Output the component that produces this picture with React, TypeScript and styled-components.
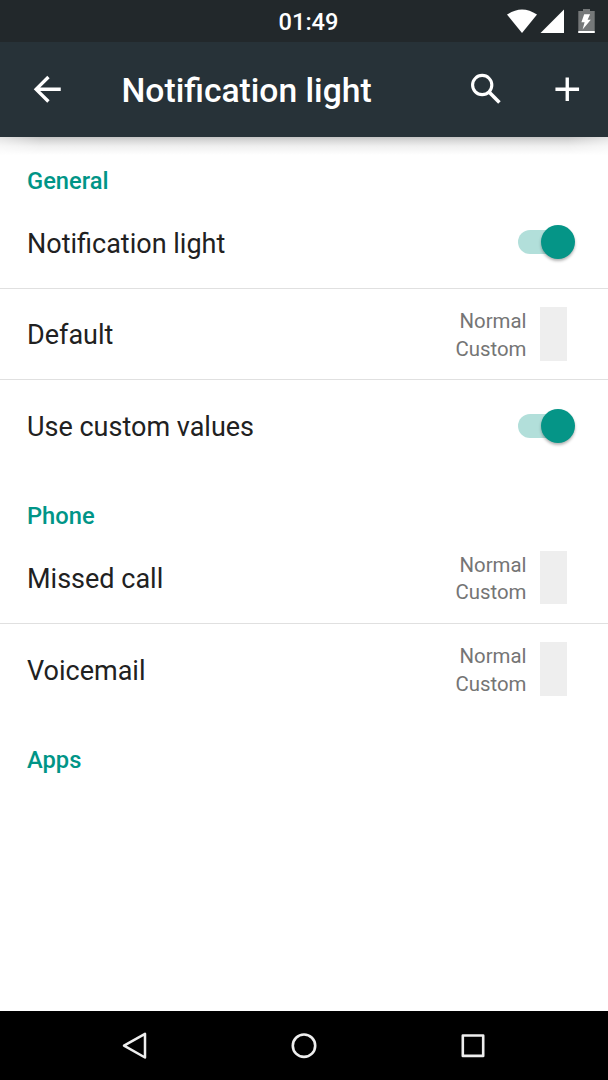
import React from 'react';
import styled, { createGlobalStyle } from 'styled-components';

const GlobalStyle = createGlobalStyle`
  * { box-sizing: border-box; }
  body { margin: 0; background: #fff; font-family: Roboto, sans-serif; }
  svg { display: block; }
`;

const Screen = styled.div`
  width: 608px;
  height: 1080px;
  display: flex;
  flex-direction: column;
  overflow: hidden;
  background: #fff;
`;

const StatusBar = styled.header`
  height: 42px;
  flex: none;
  display: grid;
  grid-template-columns: 1fr auto 1fr;
  align-items: center;
  padding: 0 13px 0 22px;
  background: #22282b;
`;

const Clock = styled.span`
  grid-column: 2;
  color: #fff;
  font-size: 23.6px;
  font-weight: 500;
  line-height: 40px;
  padding-top: 2px;
`;

const StatusIcons = styled.div`
  display: flex;
  justify-content: flex-end;
  align-items: center;
`;

const Toolbar = styled.div`
  position: relative;
  height: 94.5px;
  flex: none;
  display: flex;
  align-items: center;
  padding: 0 20.5px 0 27px;
  background: #273238;
  color: #fff;
`;

const ToolbarShadow = styled.div`
  position: absolute;
  top: 100%;
  left: 0;
  right: 0;
  height: 18px;
  background: linear-gradient(#c4c4c4, #dadada 22%, #efefef 50%, #fff);
  mask-image: linear-gradient(90deg, rgba(0, 0, 0, 0.5), #000 40px, #000 568px, rgba(0, 0, 0, 0.5));
`;

const Title = styled.h1`
  flex: 1;
  margin: 0 0 0 54px;
  padding-top: 4px;
  font-size: 33.65px;
  font-weight: 500;
  line-height: 40px;
  white-space: nowrap;
`;

const Actions = styled.div`
  display: flex;
  gap: 41px;
`;

const List = styled.main`
  flex: 1;
`;

const SectionTitle = styled.h2`
  height: 60.5px;
  margin: 0;
  padding: 30.2px 27px 0;
  color: #009587;
  font-size: 23.7px;
  font-weight: 500;
  line-height: 28px;
`;

const Row = styled.div<{ $divided?: boolean; $pad: number }>`
  height: 91.6px;
  display: flex;
  align-items: center;
  padding: 0 ${p => p.$pad}px 0 27px;
  border-bottom: 1px solid ${p => (p.$divided ? '#e0e0e0' : 'transparent')};
`;

const Label = styled.span`
  flex: 1;
  padding-top: 3.2px;
  color: #212121;
  font-size: 27px;
  line-height: 32px;
`;

const Values = styled.div`
  display: flex;
  flex-direction: column;
  align-items: flex-end;
  margin-right: 13.5px;
  padding-top: 3.6px;
  color: #757575;
  font-size: 20.4px;
  line-height: 27.5px;
`;

const Swatch = styled.div`
  width: 27px;
  height: 53.6px;
  background: #eee;
`;

const Track = styled.div`
  width: 57px;
  height: 24px;
  display: flex;
  align-items: center;
  justify-content: flex-end;
  margin-top: 0.3px;
  border-radius: 12px;
  background: linear-gradient(90deg, #b2dfda 46px, transparent 46px);
`;

const Thumb = styled.div`
  width: 34px;
  height: 34px;
  flex: none;
  border-radius: 50%;
  background: #059587;
  box-shadow: 0 2px 3px rgba(0, 0, 0, 0.3);
`;

const NavBar = styled.nav`
  height: 69px;
  flex: none;
  display: flex;
  align-items: center;
  justify-content: center;
  gap: 128px;
  background: #000;
`;

const Glyph = ({ d }: { d: string }) => (
  <svg width="40.5" height="40.5" viewBox="0 0 24 24" fill="#fff"><path d={d} /></svg>
);

const SearchGlyph = () => (
  <svg width="40.5" height="40.5" viewBox="0 0 24 24" fill="none" stroke="#fff">
    <circle cx="9.6" cy="9.5" r="5.7" strokeWidth="1.85" />
    <path d="M13.8 13.8L19.8 19.9" strokeWidth="2.1" />
  </svg>
);

const Switch = () => <Track><Thumb /></Track>;

const SwitchRow = ({ label, divided }: { label: string; divided?: boolean }) => (
  <Row $pad={33} $divided={divided}>
    <Label>{label}</Label>
    <Switch />
  </Row>
);

const LightRow = ({ label, divided }: { label: string; divided?: boolean }) => (
  <Row $pad={41} $divided={divided}>
    <Label>{label}</Label>
    <Values><span>Normal</span><span>Custom</span></Values>
    <Swatch />
  </Row>
);

export default function App() {
  return (
    <>
      <GlobalStyle />
      <Screen>
        <StatusBar>
          <Clock>01:49</Clock>
          <StatusIcons>
            <svg width="88" height="26" viewBox="507 8 88 26">
              <path d="M507 14.6Q522 4.2 537 14.6L522 33Z" fill="#fff" />
              <path d="M564 9.5V33H540.5Z" fill="#fff" />
              <path d="M583 9h7v2h4.7v22H578.3V11H583Z" fill="#757879" />
              <path d="M578.3 31h16.4v2h-16.4Z" fill="#fff" />
              <path d="M584.2 14.3h5.9l-2.5 5.4h3.2l-8.2 9.9 2-7.3h-3.2Z" fill="#fff" />
            </svg>
          </StatusIcons>
        </StatusBar>
        <Toolbar>
          <Glyph d="M20 11H7.83l5.59-5.59L12 4l-8 8 8 8 1.41-1.41L7.83 13H20v-2z" />
          <Title>Notification light</Title>
          <Actions>
            <SearchGlyph />
            <Glyph d="M19 13h-6v6h-2v-6H5v-2h6V5h2v6h6v2z" />
          </Actions>
          <ToolbarShadow />
        </Toolbar>
        <List>
          <SectionTitle>General</SectionTitle>
          <SwitchRow label="Notification light" divided />
          <LightRow label="Default" divided />
          <SwitchRow label="Use custom values" />
          <SectionTitle>Phone</SectionTitle>
          <LightRow label="Missed call" divided />
          <LightRow label="Voicemail" />
          <SectionTitle>Apps</SectionTitle>
        </List>
        <NavBar>
          <svg width="41" height="41" viewBox="0 0 41 41" fill="none" stroke="#eee" strokeWidth="2.5" strokeLinejoin="round">
            <path d="M9 20.7L30 8.9V32.5Z" />
          </svg>
          <svg width="41" height="41" viewBox="0 0 41 41" fill="none" stroke="#eee" strokeWidth="2.6">
            <circle cx="20" cy="20.7" r="11.2" />
          </svg>
          <svg width="41" height="41" viewBox="0 0 41 41" fill="none" stroke="#eee" strokeWidth="2.6" strokeLinejoin="round">
            <path d="M9.8 10.5h20.4v20.4H9.8Z" />
          </svg>
        </NavBar>
      </Screen>
    </>
  );
}
